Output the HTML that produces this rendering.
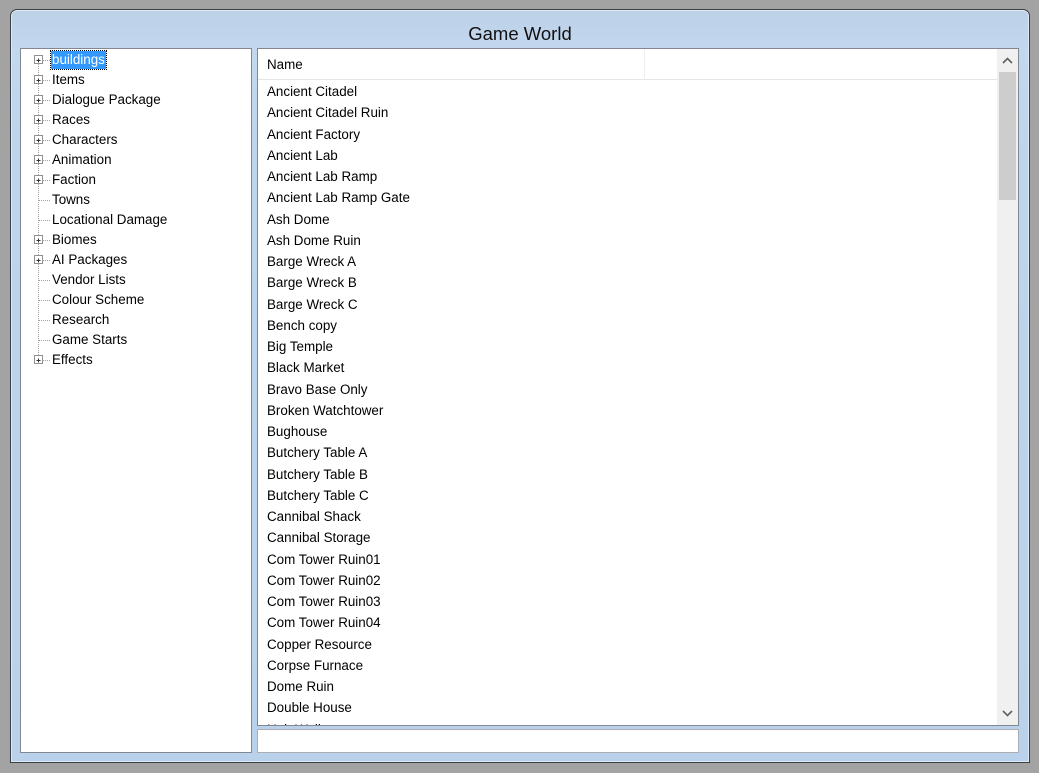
<!DOCTYPE html>
<html><head><meta charset="utf-8"><style>
*{margin:0;padding:0;box-sizing:border-box}
body{width:1039px;height:773px;background:#a3a3a3;position:relative;overflow:hidden;font-family:"Liberation Sans",Arial,sans-serif;font-size:13.4px;color:#000}
#win{position:absolute;left:10px;top:9px;width:1020px;height:754px;border:1px solid #3a3f46;border-radius:7px 7px 0 0;background:linear-gradient(#bcd0e6,#c3d8ef 40px,#bcd4ec 160px,#b9d1ea);box-shadow:inset 0 0 0 1px #dfeaf6}
#title{position:absolute;left:0;right:0;top:13px;text-align:center;font-size:18.5px;color:#111}
#tree{position:absolute;left:20px;top:48px;width:232px;height:705px;background:#fff;border:1px solid #828790}
#list{position:absolute;left:257px;top:48px;width:762px;height:678px;background:#fff;border:1px solid #828790;overflow:hidden}
#tb{position:absolute;left:257px;top:729px;width:762px;height:24px;background:#fff;border:1px solid #abadb3}
.ti{position:absolute;left:0;height:18px;line-height:18px}
.ti span{position:absolute;left:30px;white-space:nowrap;padding:0 1px}
.sel{background:#3399ff;color:#fff;outline:1px dotted #000}
.hdr{position:absolute;left:0;top:0;width:740px;height:31px;border-bottom:1px solid #e5e5e5;line-height:31px;padding-left:9px}
.hdr i{position:absolute;left:386px;top:0;height:31px;border-left:1px solid #eee}
.row{position:absolute;left:9px;white-space:nowrap}
#sb{position:absolute;right:0;top:0;width:21px;height:676px;background:#f0f0f0}
#th{position:absolute;left:2px;top:23px;width:17px;height:128px;background:#cdcdcd}
</style></head><body>
<div id="win"><div id="title">Game World</div></div>
<div id="tree">
<svg width="232" height="330" style="position:absolute;left:0;top:0">
<g stroke="#a0a0a0" stroke-dasharray="1,1" fill="none">
<line x1="17.5" y1="11" x2="17.5" y2="312"/>
</g>
</svg>
<div id="items"></div>
</div>
<div id="list">
<div class="hdr">Name<i></i></div>
<div id="rows"></div>
<div id="sb"><svg width="21" height="676" style="position:absolute;left:0;top:0"><path d="M6 14 L10.5 9.5 L15 14" stroke="#606060" stroke-width="1.6" fill="none"/><path d="M6 662 L10.5 666.5 L15 662" stroke="#606060" stroke-width="1.6" fill="none"/></svg><div id="th"></div></div>
</div>
<div id="tb"></div>
<script>
var t=[["buildings",1],["Items",1],["Dialogue Package",1],["Races",1],["Characters",1],["Animation",1],["Faction",1],["Towns",0],["Locational Damage",0],["Biomes",1],["AI Packages",1],["Vendor Lists",0],["Colour Scheme",0],["Research",0],["Game Starts",0],["Effects",1]];
var h="",s="";
t.forEach(function(e,i){var y=11+i*20;
s+='<line x1="'+(e[1]?22:18)+'" y1="'+(y+.5)+'" x2="29" y2="'+(y+.5)+'" stroke="#a0a0a0" stroke-dasharray="1,1"/>';
if(e[1])s+='<rect x="13.5" y="'+(y-4.5)+'" width="8" height="8" fill="#fff" stroke="#919191"/><path d="M15.5 '+(y+.5)+'H19.5M17.5 '+(y-1.5)+'V'+(y+2.5)+'" stroke="#333"/>';
h+='<div class="ti" style="top:'+(y-9)+'px"><span'+(i==0?' class="sel"':'')+'>'+e[0]+'</span></div>';});
document.querySelector('#tree svg').insertAdjacentHTML('beforeend',s);
document.getElementById('items').innerHTML=h;
var n=["Ancient Citadel","Ancient Citadel Ruin","Ancient Factory","Ancient Lab","Ancient Lab Ramp","Ancient Lab Ramp Gate","Ash Dome","Ash Dome Ruin","Barge Wreck A","Barge Wreck B","Barge Wreck C","Bench copy","Big Temple","Black Market","Bravo Base Only","Broken Watchtower","Bughouse","Butchery Table A","Butchery Table B","Butchery Table C","Cannibal Shack","Cannibal Storage","Com Tower Ruin01","Com Tower Ruin02","Com Tower Ruin03","Com Tower Ruin04","Copper Resource","Corpse Furnace","Dome Ruin","Double House","Hub Wall"];
var r="";n.forEach(function(x,i){r+='<div class="row" style="top:'+(35+i*21.25)+'px">'+x+'</div>';});
document.getElementById('rows').innerHTML=r;
</script>
</body></html>
